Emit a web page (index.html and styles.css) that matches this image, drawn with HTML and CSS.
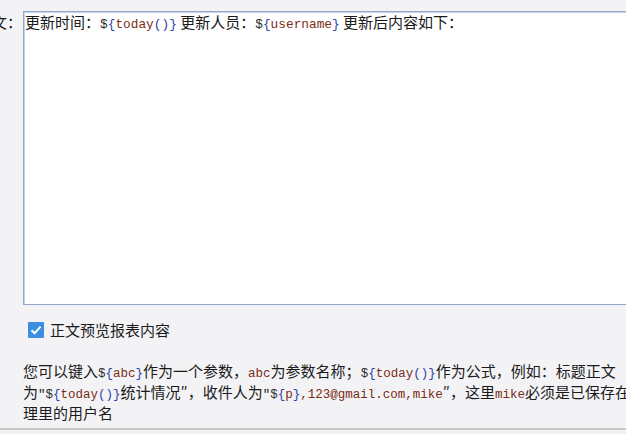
FILE: index.html
```html
<!DOCTYPE html>
<html lang="zh-CN">
<head>
  <meta charset="UTF-8" />
  <title>邮件正文设置</title>
  <link rel="stylesheet" href="styles.css">
</head>
<body>
  <div class="panel">
    <div class="field">
      <div class="label"><span>正文：</span></div>
      <div class="editor">
        <div class="line">更新时间：<code><b>$</b><i>{</i><u>today</u><i>()}</i></code> 更新人员：<code><b>$</b><i>{</i><u>username</u><i>}</i></code> 更新后内容如下：</div>
      </div>
    </div>

    <label class="check">
      <span class="box">
        <svg viewBox="0 0 16 16" width="16" height="16"><path d="M3.5 8.2 L6.6 11.2 L12.6 4.6" fill="none" stroke="#fff" stroke-width="2"/></svg>
      </span>
      正文预览报表内容
    </label>

    <div class="help">
      <div class="hl">您可以键入<code><b>$</b><i>{</i><u>abc</u><i>}</i></code>作为一个参数，<code><u>abc</u></code>为参数名称；<code><b>$</b><i>{</i><u>today</u><i>()}</i></code>作为公式，例如：标题正文</div>
      <div class="hl">为<code>"<b>$</b><i>{</i><u>today</u><i>()}</i></code>统计情况″，收件人为<code>"<b>$</b><i>{</i><u>p</u><i>}</i><u>,123@gmail.com,mike</u></code>″，这里<code><u>mike</u></code>必须是已保存在用户管</div>
      <div class="hl">理里的用户名</div>
    </div>
  </div>
  <div class="footer"></div>
</body>
</html>
```

FILE: styles.css
```css
body, html {
  margin: 0;
  padding: 0;
  background: #f3f3f6;
  font-family: "Noto Sans CJK SC", "Microsoft YaHei", sans-serif;
  font-size: 15px;
  color: #1a1a1a;
  overflow: hidden;
}
.panel {
  padding-top: 11px;
  height: 417px;
  border-bottom: 2px solid #c9c9c9;
}
.field {
  display: flex;
  gap: 1px;
}
.label {
  width: 22px;
  flex: none;
  display: flex;
  justify-content: flex-end;
  overflow: hidden;
  white-space: nowrap;
  line-height: 20px;
  padding-top: 1px;
}
.editor {
  flex: 1;
  min-width: 0;
  overflow: hidden;
  height: 292px;
  background: #fff;
  border: 1px solid #94aacb;
  border-right: none;
  box-shadow: inset 1px 1px 0 #c5d3e6;
  padding: 0 0 0 1px;
}
.line {
  line-height: 20px;
  white-space: nowrap;
}
code {
  font-family: "Liberation Mono", monospace;
  font-size: 12.5px;
}
.line code { font-size: 12.8px; }
code b { font-weight: normal; color: #2a2a2a; }
code i { font-style: normal; color: #2f3ea8; }
code u { text-decoration: none; color: #7a2c14; }
.check {
  display: flex;
  align-items: center;
  gap: 6px;
  margin: 16px 0 0 28px;
  line-height: 18px;
}
.box {
  width: 16px;
  height: 16px;
  background: #3d8ee0;
  border-radius: 1px;
  display: flex;
}
.help {
  margin-top: 23px;
  padding-left: 23px;
}
.hl {
  line-height: 18px;
  white-space: nowrap;
}
.footer {
  height: 4px;
  background: #f0f0f0;
}
```
